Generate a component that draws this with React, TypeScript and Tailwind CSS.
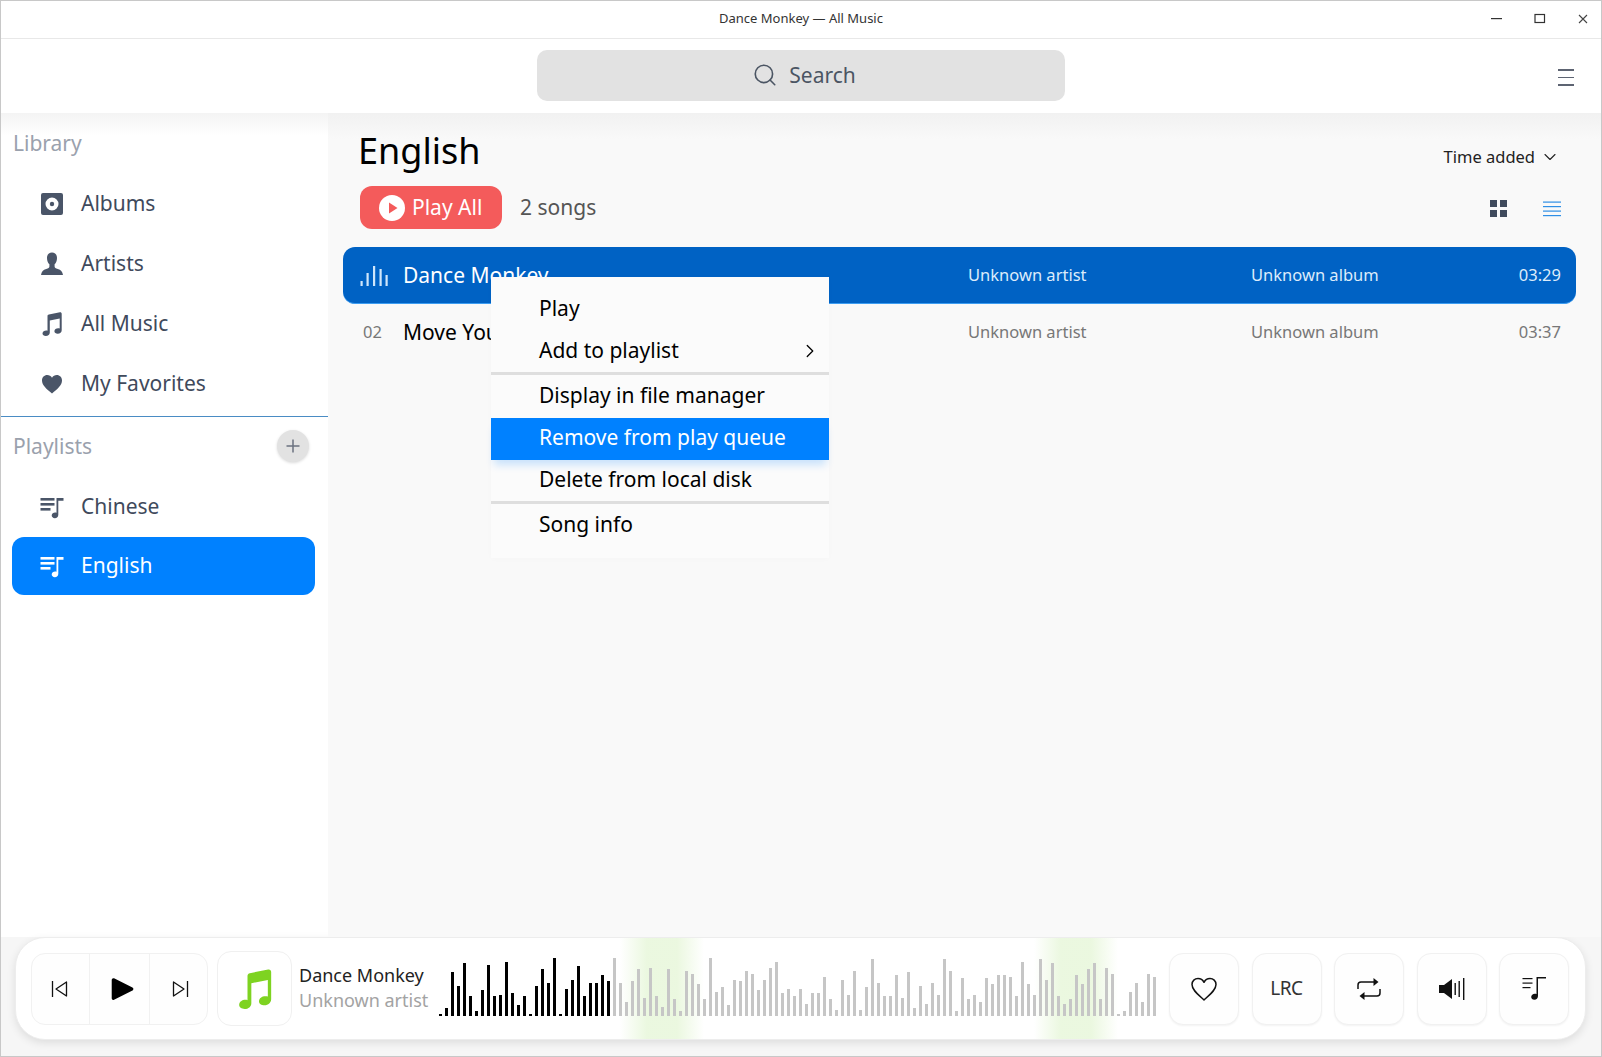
import { ChevronDown, ChevronRight, Search } from "lucide-react";

const played = [2, 8, 44, 30, 53, 20, 5, 26, 51, 20, 21, 54, 23, 11, 20, 2, 30, 47, 33, 58, 2, 27, 36, 50, 20, 33, 33, 41, 35];
const rest = [
  58, 33, 14, 35, 47, 18, 48, 20, 9, 47, 17, 5, 45, 42, 32, 17, 58, 24, 29, 11, 36, 35, 45, 42, 26, 36, 48, 54, 23, 27, 20, 27, 12, 23, 23, 39,
  17, 6, 36, 21, 45, 6, 29, 57, 33, 20, 20, 41, 18, 44, 8, 30, 12, 33, 21, 57, 45, 5, 38, 17, 21, 14, 38, 32, 41, 41, 39, 20, 54, 32, 21, 57, 36,
  53, 20, 12, 17, 41, 32, 47, 53, 17, 48, 42, 2, 5, 24, 33, 14, 42, 39,
];

function DiscIcon() {
  return (
    <svg width="24" height="24" viewBox="0 0 24 24">
      <path fillRule="evenodd" fill="#4a5568" d="M3 1h18a2 2 0 0 1 2 2v18a2 2 0 0 1-2 2H3a2 2 0 0 1-2-2V3a2 2 0 0 1 2-2zm9 4.500a6.500 6.500 0 1 0 0 13 6.500 6.500 0 0 0 0-13z" />
      <circle cx="12" cy="12" r="2.200" fill="#4a5568" />
    </svg>
  );
}

function PersonIcon() {
  return (
    <svg width="24" height="24" viewBox="0 0 24 24">
      <path fill="#4a5568" d="M12 .5c3.200 0 5 2.400 5 5.400 0 2.700-1 5-2.400 6.400v2.200c0 1.200 1 1.800 3.200 2.600 3 1 4.700 2.400 5.200 5.900H1c.5-3.500 2.200-4.900 5.200-5.900 2.200-.8 3.200-1.400 3.200-2.600v-2.200C8 10.900 7 8.600 7 5.900 7 2.900 8.800.5 12 .5z" />
    </svg>
  );
}

function NoteIcon({ color = "#4a5568", size = 24 }: { color?: string; size?: number }) {
  return (
    <svg width={size} height={size} viewBox="0 0 24 24">
      <path fill={color} d="M7.500 4.200c0-.9.500-1.500 1.400-1.700l11-2.200c1-.2 1.800.4 1.800 1.500v16.400c0 2-1.700 3.600-4 3.600-1.900 0-3.300-1-3.300-2.500 0-1.800 1.800-3 3.800-3 .6 0 1.100.1 1.500.2V6.600L9.800 8.500v12c0 2-1.700 3.500-4 3.500C3.900 24 2.500 23 2.500 21.500c0-1.800 1.800-3 3.800-3 .5 0 .9.100 1.200.2V4.200z" />
    </svg>
  );
}

function HeartFill() {
  return (
    <svg width="24" height="24" viewBox="0 0 24 24">
      <path fill="#4a5568" d="M12 21.500C6.500 17 2 13.300 2 8.500 2 5.300 4.300 3 7.200 3c2 0 3.800 1 4.800 2.800C13 4 14.800 3 16.800 3 19.700 3 22 5.300 22 8.500c0 4.800-4.500 8.500-10 13z" />
    </svg>
  );
}

function QueueIcon({ color = "#4a5568" }: { color?: string }) {
  return (
    <svg width="24" height="24" viewBox="0 0 24 24">
      <rect x="0.500" y="3" width="14" height="2.600" fill={color} />
      <rect x="0.500" y="8" width="14" height="2.600" fill={color} />
      <rect x="0.500" y="13" width="10" height="2.600" fill={color} />
      <path fill={color} d="M15.500 3h8v2.800h-5.200v14c0 2.100-1.500 3.400-3.500 3.400-1.800 0-3.100-1.100-3.100-2.600 0-1.900 1.700-3.100 3.400-3.100.5 0 .9 0 1.400.2V3z" />
    </svg>
  );
}

function NavItem({ icon, label, active, tall }: { icon: React.ReactNode; label: string; active?: boolean; tall?: boolean }) {
  if (active) {
    return (
      <div className="ml-[11px] mr-[13px] flex h-[58px] items-center gap-[17px] rounded-[12px] bg-[#0081ff] pl-[28px] text-white">
        <div className="flex w-[24px] justify-center">{icon}</div>
        <span className="text-[21px]">{label}</span>
      </div>
    );
  }
  return (
    <div className={tall ? "ml-[11px] flex h-[62px] items-center gap-[17px] pl-[28px] pt-[1px] text-[#3f4a5c]" : "ml-[11px] flex h-[60px] items-center gap-[17px] pl-[28px] text-[#3f4a5c]"}>
      <div className="flex w-[24px] justify-center">{icon}</div>
      <span className="text-[21px]">{label}</span>
    </div>
  );
}

function SongRow({ num, title, time, active }: { num?: string; title: string; time: string; active?: boolean }) {
  return (
    <div className={active ? "flex h-[57px] items-center rounded-[12px] border-b border-[#3c9df2] bg-[#0062c4] pr-[15px] text-white" : "flex h-[57px] items-center pr-[15px] text-black"}>
      <div className="flex w-[60px] justify-center text-[16.500px] text-[#777]">
        {num ? (
          <span className="pr-[1px]">{num}</span>
        ) : (
          <svg width="28" height="20" viewBox="0 0 28 20" className="ml-[2px] mt-[2px]">
            <g fill="#cfe6fb">
              <rect x="0.500" y="15" width="2.200" height="5" />
              <rect x="6.500" y="7" width="2.200" height="13" />
              <rect x="13" y="0" width="2.200" height="20" />
              <rect x="19.500" y="3" width="2.200" height="17" />
              <rect x="25.500" y="9" width="2.200" height="11" />
            </g>
          </svg>
        )}
      </div>
      <span className="mt-[1px] w-[565px] text-[21px]">{title}</span>
      <span className={active ? "w-[283px] text-[16.500px] text-[#dcecfb]" : "w-[283px] text-[16.500px] text-[#777]"}>Unknown artist</span>
      <span className={active ? "flex-1 text-[16.500px] text-[#dcecfb]" : "flex-1 text-[16.500px] text-[#777]"}>Unknown album</span>
      <span className={active ? "text-[16.500px] text-[#dcecfb]" : "text-[16.500px] text-[#777]"}>{time}</span>
    </div>
  );
}

function MenuItem({ label, active, arrow }: { label: string; active?: boolean; arrow?: boolean }) {
  return (
    <div className={active ? "mb-[-1px] mt-[1px] flex h-[42px] items-center justify-between bg-[#0081ff] pb-[2px] pl-[48px] pr-[8px] text-white shadow-[0_8px_8px_-3px_rgba(0,129,255,0.2)]" : "flex h-[42px] items-center justify-between pl-[48px] pr-[8px] text-black"}>
      <span>{label}</span>
      {arrow && <ChevronRight size={22} strokeWidth={1.400} />}
    </div>
  );
}

function PlayerButton({ children }: { children: React.ReactNode }) {
  return <div className="flex h-[72px] w-[70px] items-center justify-center rounded-[14px] border border-[#f1f1f1] bg-[#fefefe] shadow-[0_1px_2px_rgba(0,0,0,0.05)]">{children}</div>;
}

export default function App() {
  return (
    <div className="flex h-[1057px] w-[1602px] flex-col overflow-hidden border border-[#c8c8c8] bg-white font-['Noto_Sans',sans-serif]">
      {/* title bar */}
      <div className="relative flex h-[38px] shrink-0 items-center justify-center border-b border-[#e8e8e8] pb-[2px] text-[13px] text-[#333]">
        Dance Monkey — All Music
        <div className="absolute right-[11px] top-0 flex h-[36px] items-center gap-[29px]">
          <svg width="14" height="14" viewBox="0 0 14 14"><rect x="1" y="6" width="11" height="1.200" fill="#333" /></svg>
          <svg width="14" height="14" viewBox="0 0 14 14"><rect x="2" y="2.500" width="9.500" height="8" fill="none" stroke="#333" strokeWidth="1.200" /></svg>
          <svg width="14" height="14" viewBox="0 0 14 14"><path d="M3 3l8 8M11 3l-8 8" stroke="#444" strokeWidth="1.100" /></svg>
        </div>
      </div>

      {/* toolbar */}
      <div className="relative flex h-[74px] shrink-0 items-center justify-center pb-[2px]">
        <div className="flex h-[51px] w-[528px] items-center justify-center gap-[11px] rounded-[10px] bg-[#e2e2e2] pl-[6px] text-[21px] text-[#4b5563]">
          <Search size={26} strokeWidth={1.500} />
          <span className="mt-[1px]">Search</span>
        </div>
        <div className="absolute right-[27px] top-[30px] flex w-[16px] flex-col gap-[6px]">
          <div className="h-[1.500px] bg-[#5d6472]" />
          <div className="h-[1.500px] bg-[#5d6472]" />
          <div className="h-[1.500px] bg-[#5d6472]" />
        </div>
      </div>

      <div className="flex min-h-0 flex-1">
        {/* sidebar */}
        <div className="w-[327px] shrink-0 bg-[linear-gradient(#f4f4f4,#ffffff_22px)]">
          <div className="flex h-[61px] items-center pl-[12px] text-[21px] text-[#9aa1ad]">Library</div>
          <NavItem icon={<DiscIcon />} label="Albums" />
          <NavItem icon={<PersonIcon />} label="Artists" />
          <NavItem icon={<NoteIcon />} label="All Music" />
          <NavItem icon={<HeartFill />} label="My Favorites" />
          <div className="mt-[2px] h-px bg-[#4a8cc4]" />
          <div className="flex h-[58px] items-center justify-between pl-[12px] pr-[19px] text-[21px] text-[#9aa1ad]">
            <span className="mt-[2px]">Playlists</span>
            <div className="flex h-[32px] w-[32px] items-center justify-center rounded-full bg-[#e2e2e2] shadow-[0_1px_3px_rgba(0,0,0,0.15)]">
              <svg width="14" height="14" viewBox="0 0 14 14"><path d="M7 0.500v13M0.500 7h13" stroke="#6b7280" strokeWidth="1.500" /></svg>
            </div>
          </div>
          <NavItem icon={<QueueIcon />} label="Chinese" tall />
          <NavItem icon={<QueueIcon color="#ffffff" />} label="English" active />
        </div>

        {/* song list */}
        <div className="relative min-w-0 flex-1 bg-[linear-gradient(#f1f1f1,#f9f9f9_26px)]">
          <div className="mt-[13px] flex h-[50px] items-center justify-between pl-[30px] pr-[41px]">
            <span className="text-[36px] leading-[50px] text-black">English</span>
            <div className="mt-[12px] flex items-center gap-[5px] text-[16.500px] text-[#222]">
              <span>Time added</span>
              <ChevronDown size={20} strokeWidth={1.300} />
            </div>
          </div>
          <div className="mt-[10px] flex h-[43px] items-center pl-[32px] pr-[40px]">
            <div className="flex h-[43px] w-[142px] items-center gap-[7px] rounded-[12px] bg-[#f45b5b] pl-[19px] text-[21px] text-white">
              <svg width="26" height="26" viewBox="0 0 26 26">
                <circle cx="13" cy="13" r="13" fill="#ffffff" />
                <path d="M10 7.500l8.500 5.500-8.500 5.500z" fill="#f45b5b" />
              </svg>
              <span>Play All</span>
            </div>
            <span className="ml-[18px] text-[21px] text-[#555]">2 songs</span>
            <div className="ml-auto mt-[2px] flex items-center gap-[36px]">
              <svg width="17" height="17" viewBox="0 0 17 17" fill="#3f4a5c">
                <rect width="7" height="7" />
                <rect x="10" width="7" height="7" />
                <rect y="10" width="7" height="7" />
                <rect x="10" y="10" width="7" height="7" />
              </svg>
              <svg width="18" height="16" viewBox="0 0 18 16" fill="#2f8fe6">
                <rect width="18" height="1.200" y="0.500" />
                <rect width="18" height="1.200" y="5" />
                <rect width="18" height="1.200" y="9.500" />
                <rect width="18" height="1.200" y="14" />
              </svg>
            </div>
          </div>
          <div className="ml-[15px] mr-[25px] mt-[18px]">
            <SongRow title="Dance Monkey" time="03:29" active />
            <SongRow num="02" title="Move Your Body" time="03:37" />
          </div>

          {/* context menu */}
          <div className="absolute left-[163px] top-[164px] w-[338px] bg-[#fbfbfb] pb-[12px] pt-[11px] text-[21px] shadow-[0_1px_6px_rgba(0,0,0,0.02)]">
            <MenuItem label="Play" />
            <MenuItem label="Add to playlist" arrow />
            <div className="h-[3px] bg-[#dedede]" />
            <MenuItem label="Display in file manager" />
            <MenuItem label="Remove from play queue" active />
            <MenuItem label="Delete from local disk" />
            <div className="h-[3px] bg-[#dedede]" />
            <MenuItem label="Song info" />
          </div>
        </div>
      </div>

      {/* player */}
      <div className="h-[119px] shrink-0 bg-[#f6f6f6] pl-[14px] pr-[15px]">
        <div className="flex h-[103px] items-center rounded-[30px] border border-[#ededed] bg-white pl-[15px] pr-[16px] shadow-[0_3px_8px_rgba(0,0,0,0.1)]">
          <div className="flex h-[72px] w-[177px] shrink-0 rounded-[14px] border border-[#f1f1f1] bg-[#fefefe]">
            <div className="flex w-[58px] items-center justify-center border-r border-[#f1f1f1] pr-[2px]">
              <svg width="18" height="18" viewBox="0 0 18 18" fill="none" stroke="#111" strokeWidth="1.300" strokeLinejoin="round">
                <path d="M1.500 1v16" />
                <path d="M15.500 2L5 9l10.500 7z" />
              </svg>
            </div>
            <div className="flex w-[60px] items-center justify-center border-r border-[#f1f1f1] pl-[4px]">
              <svg width="26" height="26" viewBox="0 0 24 24">
                <path fill="#000" stroke="#000" strokeWidth="3" strokeLinejoin="round" d="M4 3.500l17 8.500-17 8.500z" />
              </svg>
            </div>
            <div className="flex flex-1 items-center justify-center pl-[2px]">
              <svg width="18" height="18" viewBox="0 0 18 18" fill="none" stroke="#111" strokeWidth="1.300" strokeLinejoin="round">
                <path d="M16.500 1v16" />
                <path d="M2.500 2L13 9 2.500 16z" />
              </svg>
            </div>
          </div>
          <div className="ml-[9px] flex h-[75px] w-[75px] shrink-0 items-center justify-center rounded-[14px] border border-[#f0f0f0]">
            <NoteIcon color="#7ed321" size={40} />
          </div>
          <div className="mb-[2px] ml-[7px] w-[140px] shrink-0">
            <div className="text-[18px] leading-[25px] text-[#222]">Dance Monkey</div>
            <div className="text-[18px] leading-[25px] text-[#a3a3a3]">Unknown artist</div>
          </div>

          <div className="relative flex h-full flex-1 items-end pb-[23px]">
            <div className="absolute bottom-0 left-[181px] top-0 w-[84px] bg-[linear-gradient(90deg,transparent,rgba(130,210,60,0.16)_32%,rgba(130,210,60,0.16)_68%,transparent)]" />
            <div className="absolute bottom-0 left-[595px] top-0 w-[84px] bg-[linear-gradient(90deg,transparent,rgba(130,210,60,0.16)_32%,rgba(130,210,60,0.16)_68%,transparent)]" />
            <div className="relative flex items-end gap-[3px]">
              {played.map((h, i) => (
                <div key={i} className="w-[3px] bg-black" style={{ height: h }} />
              ))}
              {rest.map((h, i) => (
                <div key={i} className="w-[3px] bg-[#c6c6c6]" style={{ height: h }} />
              ))}
            </div>
          </div>

          <div className="flex shrink-0 gap-[12.500px]">
            <PlayerButton>
              <svg width="28" height="28" viewBox="0 0 28 28" fill="none" stroke="#111" strokeWidth="1.500" strokeLinejoin="round">
                <path d="M14 25C8 19.500 2 15 2 9.500 2 5.800 4.800 3.500 8 3.500c2.500 0 4.800 1.400 6 3.800 1.200-2.400 3.500-3.800 6-3.800 3.200 0 6 2.300 6 6C26 15 20 19.500 14 25z" />
              </svg>
            </PlayerButton>
            <PlayerButton>
              <span className="text-[19px] tracking-[-0.5px] text-[#333]">LRC</span>
            </PlayerButton>
            <PlayerButton>
              <svg width="26" height="26" viewBox="0 0 26 26" fill="none" stroke="#111" strokeWidth="1.500">
                <path d="M2 13V9a3 3 0 0 1 3-3h14" />
                <path d="M24 13v4a3 3 0 0 1-3 3H7" />
                <path d="M17.500 2l5 4-5 4z" fill="#111" stroke="none" />
                <path d="M8.500 16l-5 4 5 4z" fill="#111" stroke="none" />
              </svg>
            </PlayerButton>
            <PlayerButton>
              <svg width="28" height="24" viewBox="0 0 28 24" fill="#111">
                <path d="M1 8h5l8-6v20l-8-6H1z" />
                <rect x="16.500" y="6" width="1.400" height="12" />
                <rect x="20.500" y="4" width="1.400" height="16" />
                <rect x="25" y="1" width="1.400" height="22" />
              </svg>
            </PlayerButton>
            <PlayerButton>
              <svg width="25" height="25" viewBox="0 0 25 25" fill="#111">
                <rect x="0.500" y="2" width="10" height="1.200" />
                <rect x="0.500" y="6.500" width="10" height="1.200" />
                <rect x="0.500" y="11" width="8" height="1.200" />
                <path d="M14.500 1H24v1.400h-8V20c0 2.200-1.500 3.800-3.600 3.800-1.900 0-3.200-1.200-3.200-2.800 0-1.900 1.700-3.300 3.500-3.300.7 0 1.300.1 1.800.4V1z" />
              </svg>
            </PlayerButton>
          </div>
        </div>
      </div>
    </div>
  );
}
